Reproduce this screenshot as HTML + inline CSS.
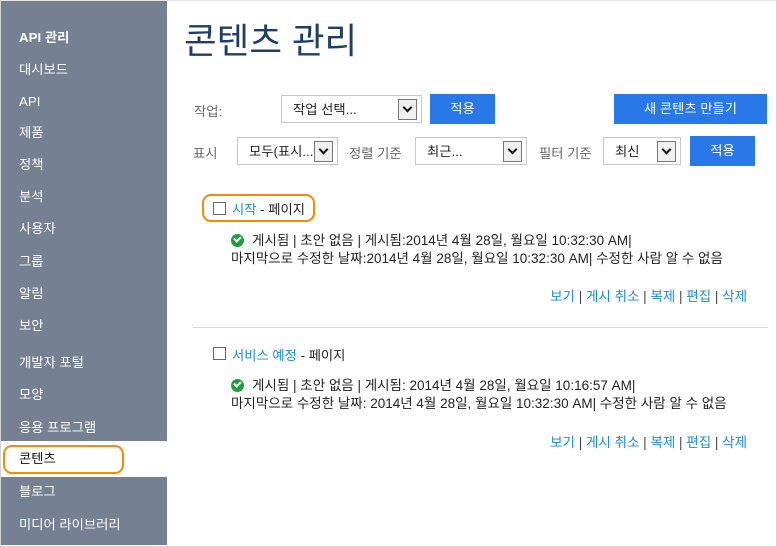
<!DOCTYPE html>
<html><head><meta charset="utf-8"><style>
*{box-sizing:border-box;margin:0;padding:0}
body{width:777px;height:547px;background:#fff;font-family:"Liberation Sans","Noto Sans CJK KR",sans-serif;position:relative;overflow:hidden;font-size:13.3px;color:#222}
.frame{position:absolute;left:0;top:0;width:777px;height:547px;border:1px solid #d4d4d4;border-top-color:#e6e6e6}
.side{position:absolute;left:1px;top:1px;width:166px;height:544px;background:#758192}
.gap{position:absolute;left:1px;top:441px;width:166px;height:36px;background:#fff}
.nav{position:absolute;left:19px;color:#fff;font-size:13.3px;line-height:16px}
.a{position:absolute;white-space:nowrap}
.sel{position:absolute;border:1px solid #c8c8c8;background:#fff;height:28px;font-size:13.3px;padding-left:11px;line-height:27px;color:#222}
.sel i{position:absolute;right:4px;top:3px;width:19px;height:21px;border:1px solid #777;background:#f0f0f0}
.sel i:after{content:"";position:absolute;left:5px;top:4px;width:5px;height:5px;border-right:2px solid #111;border-bottom:2px solid #111;transform:rotate(45deg)}
.btn{position:absolute;background:#2878e8;color:#fff;text-align:center;font-size:13.3px;line-height:30px;height:30px}
.lbl{position:absolute;color:#666;font-size:13.3px}
.cb{position:absolute;width:13px;height:13px;border:1px solid #666;background:#fff}
.lk{color:#1a8fd0}
.chk{display:inline-block;width:13px;height:13px;border-radius:50%;background:#1e9e3e;vertical-align:-2px;position:relative;margin-right:8px}
.chk:after{content:"";position:absolute;left:3px;top:2px;width:5px;height:3px;border-left:2px solid #fff;border-bottom:2px solid #fff;transform:rotate(-45deg)}
.meta{position:absolute;left:231px;font-size:13.5px;line-height:18px;color:#222;white-space:nowrap}
.acts{position:absolute;right:30px;font-size:13.5px;color:#444;white-space:nowrap}
.acts span{color:#1a8fd0}
</style></head><body>
<div class="frame"></div>
<div class="side"></div>
<div class="gap"></div>
<div class="nav" style="top:30px;font-weight:bold">API 관리</div>
<div class="nav" style="top:62px">대시보드</div>
<div class="nav" style="top:94px">API</div>
<div class="nav" style="top:125px">제품</div>
<div class="nav" style="top:157px">정책</div>
<div class="nav" style="top:189px">분석</div>
<div class="nav" style="top:221px">사용자</div>
<div class="nav" style="top:254px">그룹</div>
<div class="nav" style="top:286px">알림</div>
<div class="nav" style="top:318px">보안</div>
<div class="nav" style="top:355px">개발자 포털</div>
<div class="nav" style="top:387px">모양</div>
<div class="nav" style="top:420px">응용 프로그램</div>
<div class="nav" style="top:451px;color:#111">콘텐츠</div>
<div style="position:absolute;left:3px;top:445px;width:121px;height:29px;border:2px solid #f58a07;border-radius:9px"></div>
<div class="nav" style="top:484px">블로그</div>
<div class="nav" style="top:517px">미디어 라이브러리</div>

<div class="a" style="left:184px;top:19px;font-size:35.5px;color:#1d3e66;line-height:44px">콘텐츠 관리</div>

<div class="lbl" style="left:194px;top:101px">작업:</div>
<div class="sel" style="left:281px;top:95px;width:141px">작업 선택...<i></i></div>
<div class="btn" style="left:430px;top:94px;width:65px">적용</div>
<div class="btn" style="left:614px;top:94px;width:153px">새 콘텐츠 만들기</div>

<div class="lbl" style="left:193px;top:143px">표시</div>
<div class="sel" style="left:237px;top:137px;width:101px">모두(표시...<i></i></div>
<div class="lbl" style="left:349px;top:143px">정렬 기준</div>
<div class="sel" style="left:415px;top:137px;width:112px">최근...<i></i></div>
<div class="lbl" style="left:539px;top:143px">필터 기준</div>
<div class="sel" style="left:603px;top:137px;width:78px">최신<i></i></div>
<div class="btn" style="left:690px;top:136px;width:65px">적용</div>

<div style="position:absolute;left:202px;top:194px;width:113px;height:28px;border:2px solid #f58a07;border-radius:9px"></div>
<div class="cb" style="left:213px;top:202px"></div>
<div class="a" style="left:232px;top:199px"><span class="lk">시작</span> - 페이지</div>
<div class="meta" style="top:232px"><span class="chk"></span>게시됨 | 초안 없음 | 게시됨:2014년 4월 28일, 월요일 10:32:30 AM|<br>마지막으로 수정한 날짜:2014년 4월 28일, 월요일 10:32:30 AM| 수정한 사람 알 수 없음</div>
<div class="acts" style="top:285px"><span>보기</span> | <span>게시 취소</span> | <span>복제</span> | <span>편집</span> | <span>삭제</span></div>

<div style="position:absolute;left:193px;top:327px;width:575px;height:1px;background:#d8d8d8"></div>
<div class="cb" style="left:213px;top:347px"></div>
<div class="a" style="left:232px;top:345px"><span class="lk">서비스 예정</span> - 페이지</div>
<div class="meta" style="top:377px"><span class="chk"></span>게시됨 | 초안 없음 | 게시됨: 2014년 4월 28일, 월요일 10:16:57 AM|<br>마지막으로 수정한 날짜: 2014년 4월 28일, 월요일 10:32:30 AM| 수정한 사람 알 수 없음</div>
<div class="acts" style="top:431px"><span>보기</span> | <span>게시 취소</span> | <span>복제</span> | <span>편집</span> | <span>삭제</span></div>
</body></html>
